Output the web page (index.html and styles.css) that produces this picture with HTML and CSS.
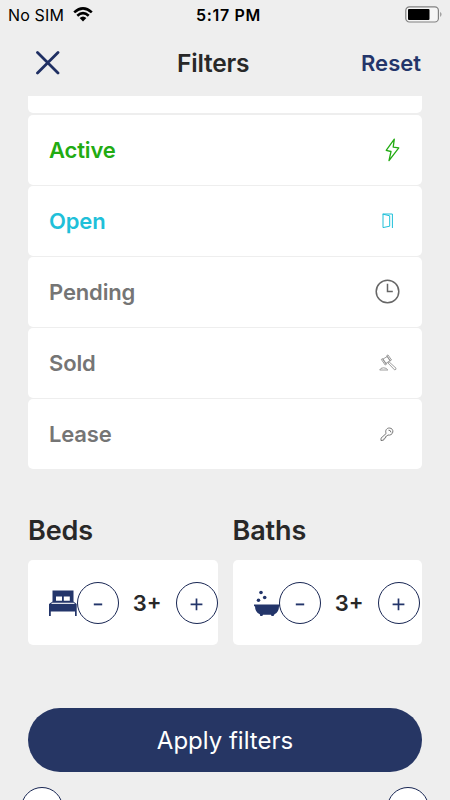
FILE: index.html
```html
<!DOCTYPE html>
<html lang="en">
<head>
<meta charset="utf-8">
<title>Filters</title>
<link rel="stylesheet" href="styles.css">
</head>
<body>
<div class="screen">
  <div class="status">
    <div class="carrier"><span>No SIM</span>
      <svg width="20" height="15" viewBox="0 0 20 15"><g fill="none" stroke="#000" stroke-width="2.6"><path d="M1.2 5.4Q10-2.6 18.8 5.4"/><path d="M4.3 8.8Q10 3.6 15.7 8.8"/></g><path d="M6.6 11Q10 8 13.4 11L10 14.4Z"/></svg>
    </div>
    <span class="time">5:17 PM</span>
    <svg class="battery" width="38" height="17" viewBox="0 0 38 17"><rect x=".8" y=".8" width="32.6" height="15.2" rx="3.6" fill="#f5f5f5" stroke="#808080" stroke-width="1.2"/><rect x="3" y="3" width="21.5" height="11" rx="1" fill="#000"/><path d="M35.3 5.8q2.3 2.6 0 5.2z" fill="#808080"/></svg>
  </div>
  <header class="header">
    <svg width="24" height="24" viewBox="0 0 24 24"><path d="M1.5 1.5 22 22M22 1.5 1.5 22" stroke="#1f2f63" stroke-width="2.8" stroke-linecap="round"/></svg>
    <h1>Filters</h1>
    <span class="reset">Reset</span>
  </header>
  <main class="content">
    <div class="row cut"></div>
    <div class="row active"><span>Active</span>
      <svg width="15" height="24" viewBox="0 0 15 24"><path d="M9.3 1.2 1.2 12.3 6 13.5 4 22.6 13.8 9.9 8.2 9.2Z" fill="none" stroke="currentColor" stroke-width="1.3" stroke-linejoin="round"/></svg>
    </div>
    <div class="row open"><span>Open</span>
      <svg class="door" width="12" height="16" viewBox="0 0 12 16"><path d="M.6 1H10.4V15M1 1V14.6L7.7 13.2V2.8L1 1.2" fill="none" stroke="currentColor"/></svg>
    </div>
    <div class="row"><span>Pending</span>
      <svg class="clock" width="25" height="25" viewBox="0 0 25 25"><circle cx="12.5" cy="12.5" r="11.3"/><path d="M12.5 4.7V12.5H17.8"/></svg>
    </div>
    <div class="row"><span>Sold</span>
      <svg class="gavel" width="18" height="18" viewBox="0 0 18 18"><path d="M3.8 5.2 8.4 2.4 11.2 6.6 6.6 9.6ZM2.3 5.4 3.7 4.6 7.6 10.2 6.2 11ZM7.6 1.8 9 .9 12.5 6 11.1 7ZM8.8 8.8 10 7.8 17 14.2Q17.3 15.8 15.6 15.9ZM.7 16Q1.4 13.8 4.5 13.8T8.8 16Z"/></svg>
    </div>
    <div class="row"><span>Lease</span>
      <svg class="key" width="14" height="15" viewBox="0 0 14 15"><path d="M6.1 6.5C4.8 3.2 7 1 9.2 1C12 1 13.2 3.1 12.8 5.1C12.3 7.5 10 8.5 7.8 8L6.8 9.1 5.8 9.4 5.5 11 4.2 11.4 3.8 13 1 13.6 1 11.2Z"/><path d="M8.5 3.2Q10.5 2.8 11 5.4"/></svg>
    </div>
    <div class="counters">
      <section>
        <h2>Beds</h2>
        <div class="card">
          <svg width="28" height="26" viewBox="0 0 28 26"><path fill="#23356a" fill-rule="evenodd" d="M3.5.5H24.5V11.5L27.7 14V26H26V21.6H1.8V26H0V14L3.5 11.5ZM7 6.5V10.7H13V6.5ZM14.8 6.5V10.7H20.8V6.5Z"/><path d="M2.5 13.3H25.5" stroke="#fff" stroke-width="1.1"/></svg>
          <span class="circle">
            <svg width="10" height="12" viewBox="0 0 10 12"><path d="M.8 7.4H9.2" stroke="currentColor" stroke-width="1.9"/></svg>
          </span><b class="count">3+</b><span class="circle">
            <svg width="13" height="16" viewBox="0 0 13 16"><path d="M.6 9.4H12.4M6.5 3.5V15.3" stroke="currentColor" stroke-width="1.7"/></svg>
          </span>
        </div>
      </section>
      <section>
        <h2>Baths</h2>
        <div class="card">
          <svg class="bath" width="26" height="26" viewBox="0 0 26 26"><g fill="#23356a"><circle cx="7" cy="2.5" r="1.8"/><circle cx="10.7" cy="7.5" r="1.8"/><circle cx="4.5" cy="10.2" r="1.8"/><path d="M0 14.4H26V16.3H25Q25 22.3 20.5 24.2L19.5 26H17.5L17 24.8H9L8.3 26H6.3L5.8 24.2Q1 22.2 1 16.3H0Z"/></g></svg>
          <span class="circle">
            <svg width="10" height="12" viewBox="0 0 10 12"><path d="M.8 7.4H9.2" stroke="currentColor" stroke-width="1.9"/></svg>
          </span><b class="count">3+</b><span class="circle">
            <svg width="13" height="16" viewBox="0 0 13 16"><path d="M.6 9.4H12.4M6.5 3.5V15.3" stroke="currentColor" stroke-width="1.7"/></svg>
          </span>
        </div>
      </section>
    </div>
    <button class="apply">Apply filters</button>
    <div class="slider"><span class="circle"></span><span class="circle"></span></div>
  </main>
</div>
</body>
</html>
```
FILE: styles.css
```css
* { box-sizing: border-box; }
body { margin: 0; font-family: Inter, "Liberation Sans", sans-serif; }
svg { display: block; flex: none; }
.screen { width: 450px; height: 800px; overflow: hidden; background: #eee; color: #282828; }
.status { display: grid; grid-template-columns: 188px auto 1fr; align-items: center; height: 29px; padding: 0 8px; font-size: 16px; line-height: 20px; color: #000; }
.carrier { display: flex; align-items: center; gap: 9px; letter-spacing: .15px; }
.time { font-weight: 600; letter-spacing: .65px; }
.battery { justify-self: end; margin-right: -1px; }
.header { display: grid; grid-template-columns: 141px auto 1fr; align-items: center; height: 67px; padding: 0 28px 0 36px; }
h1 { margin: 0; font-size: 24.5px; line-height: 30px; font-weight: 600; letter-spacing: -.2px; }
.reset { justify-self: end; margin-right: 1px; font-size: 22px; line-height: 28px; font-weight: 600; color: #23356a; }
.content { padding: 0 28px; }
.row { display: flex; align-items: center; justify-content: space-between; height: 69.6px; margin-bottom: 1.5px; padding: 0 22px 0 21px; border-radius: 5px; background: #fff; color: #757575; font-size: 22px; line-height: 28px; font-weight: 600; letter-spacing: -.15px; }
.row.cut { height: 17px; margin-bottom: 2px; border-radius: 0 0 5px 5px; }
.row.active { color: #22ab12; }
.row.open { color: #1fc0d9; }
.door { margin-right: 6px; }
.clock, .gavel, .key { fill: none; stroke: #666; stroke-width: 1.5; }
.gavel { margin-right: 3px; stroke: #858585; stroke-width: .8; }
.key { margin-right: 6px; stroke: #777; stroke-width: 1; }
.counters { display: grid; grid-template-columns: 1fr 1fr; gap: 15px; padding-top: 43px; }
h2 { margin: 0 0 11px; font-size: 27px; line-height: 36px; font-weight: 600; letter-spacing: -.1px; }
.card { display: flex; align-items: center; height: 84.5px; padding-left: 21px; border-radius: 5px; background: #fff; }
.bath { margin-right: -.5px; }
.circle { display: flex; flex: none; align-items: center; justify-content: center; width: 42px; height: 42px; border: 1.5px solid #182653; border-radius: 50%; background: #fff; color: #23356a; }
.count { width: 56.5px; flex: none; text-align: center; font-size: 22px; line-height: 28px; font-weight: 600; }
.apply { display: block; width: 100%; height: 64px; margin: 63px 0 15px; padding: 2px 0 0; border: 0; border-radius: 32px; background: #263664; color: #fff; font: 400 24px/30px Inter, "Liberation Sans", sans-serif; }
.slider { display: flex; justify-content: space-between; margin: 0 -7px; }
```
